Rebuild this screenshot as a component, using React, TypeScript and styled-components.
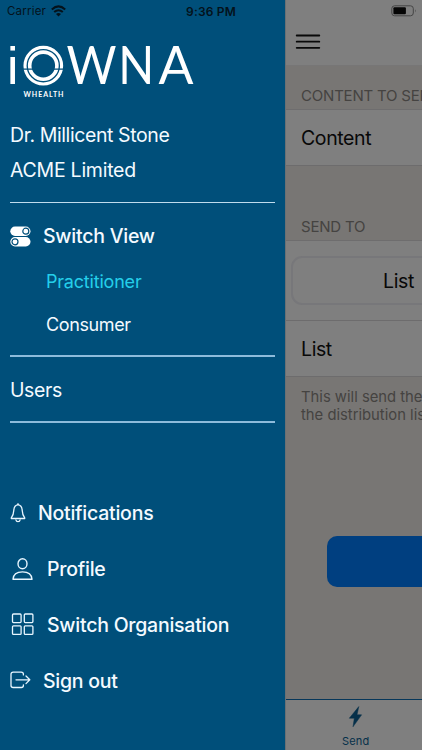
import React from "react";
import styled, { createGlobalStyle } from "styled-components";

const GlobalStyle = createGlobalStyle`
  * { box-sizing: border-box; }
  body { margin: 0; overflow: hidden; font-family: Inter, "Liberation Sans", sans-serif; }
`;

const Screen = styled.div`
  display: grid;
  grid-template-columns: 285px 137px;
  width: 422px;
  height: 750px;
  overflow: hidden;
  background: #7f7f7f;
`;

const Drawer = styled.nav`
  display: flex;
  flex-direction: column;
  background: #004f7a;
  color: #f4faff;
`;

const StatusBar = styled.div`
  display: flex;
  align-items: center;
  flex: none;
  height: 22px;
  color: #04121b;
`;

const Carrier = styled.span`
  width: 44px;
  margin-left: 7px;
  font-size: 11.5px;
  letter-spacing: 0.2px;
  white-space: nowrap;
`;

const Clock = styled.span`
  margin-left: 120px;
  font-size: 12px;
  font-weight: 600;
  letter-spacing: 0.2px;
  white-space: nowrap;
`;

const LogoBox = styled.div`
  flex: none;
  height: 96px;
  svg { display: block; }
`;

const Identity = styled.div<{ $spacing: number }>`
  flex: none;
  height: 35px;
  padding-left: 10px;
  line-height: 35px;
  font-size: 19.5px;
  letter-spacing: ${(p) => p.$spacing}px;
  white-space: nowrap;
`;

const Rule = styled.hr<{ $top?: number; $thick?: boolean }>`
  flex: none;
  width: 265px;
  height: ${(p) => (p.$thick ? 2 : 1)}px;
  margin: ${(p) => p.$top ?? 0}px 0 0 10px;
  border: 0;
  background: ${(p) => (p.$thick ? "#8dbbdb" : "#c0dcee")};
`;

const SwitchHeading = styled.div`
  display: flex;
  align-items: center;
  flex: none;
  height: 40px;
  margin-top: 13px;
  padding-left: 10px;
`;

const Label = styled.span<{ $gap: number }>`
  margin-left: ${(p) => p.$gap}px;
  font-size: 19.5px;
  font-weight: 500;
  letter-spacing: -0.24px;
  white-space: nowrap;
`;

const ViewList = styled.div`
  flex: none;
  margin-top: 5px;
`;

const ViewOption = styled.div<{ $active?: boolean }>`
  height: 42px;
  padding-left: 46px;
  line-height: ${(p) => (p.$active ? 42 : 44)}px;
  font-size: 18px;
  letter-spacing: ${(p) => (p.$active ? -0.2 : -0.38)}px;
  color: ${(p) => (p.$active ? "#24cfea" : "#f4faff")};
`;

const UsersRow = styled.div`
  flex: none;
  height: 64px;
  padding-left: 10px;
  line-height: 67px;
  font-size: 19.5px;
  letter-spacing: -0.4px;
`;

const Actions = styled.div`
  display: grid;
  grid-auto-rows: 56px;
  margin-top: 62px;
`;

const Action = styled.div`
  display: flex;
  align-items: center;
  padding-left: 10px;
  svg { flex: none; display: block; }
`;

const Main = styled.main`
  display: flex;
  flex-direction: column;
  min-width: 0;
  overflow: hidden;
  background: #787674;
  border-left: 1px solid #6a7074;
  color: #080808;
`;

const MainStatus = styled(StatusBar)`
  padding-left: 105px;
  background: #7f7f7f;
`;

const Toolbar = styled.div`
  flex: none;
  height: 44px;
  padding: 11px 0 0 9px;
  background: #7f7f7f;
  border-bottom: 1px solid #777676;
`;

const GroupTitle = styled.div<{ $height: number }>`
  display: flex;
  align-items: flex-end;
  flex: none;
  height: ${(p) => p.$height}px;
  padding: 0 0 4px 15px;
  border-bottom: 1px solid #6e6d6e;
  font-size: 15px;
  line-height: 18px;
  letter-spacing: -0.2px;
  color: #454341;
  white-space: nowrap;
`;

const ListRow = styled.div`
  flex: none;
  height: 56px;
  padding-left: 15px;
  line-height: 57px;
  border-bottom: 1px solid #6d6c6d;
  background: #7f7f7f;
  font-size: 19.5px;
  letter-spacing: -0.4px;
`;

const SegmentRow = styled.div`
  flex: none;
  height: 80px;
  padding: 15px 0 0 5px;
  border-bottom: 1px solid #6d6c6d;
  background: #7f7f7f;
`;

const Segment = styled.div`
  width: 215px;
  height: 49px;
  border: 2px solid #77777a;
  border-radius: 11px;
  line-height: 46px;
  text-align: center;
  font-size: 19.5px;
  letter-spacing: -0.4px;
  background: #7f7f7f;
`;

const Note = styled.p`
  flex: none;
  width: 260px;
  height: 159px;
  margin: 0;
  padding: 11px 0 0 15px;
  font-size: 14.8px;
  line-height: 18px;
  color: #454341;
  white-space: nowrap;
`;

const PrimaryButton = styled.button`
  flex: none;
  display: block;
  width: 180px;
  height: 51px;
  margin-left: 41px;
  border: 0;
  border-radius: 10px;
  background: #003f80;
`;

const TabBar = styled.div`
  display: flex;
  flex-direction: column;
  flex: none;
  height: 51px;
  margin-top: auto;
  padding-left: 56px;
  border-top: 1px solid #07375a;
  background: #7f7f7f;
  color: #06304a;
  svg { display: block; margin: 6px 0 0 6px; }
`;

const TabLabel = styled.span`
  margin-top: 6px;
  font-size: 11px;
  line-height: 14px;
  letter-spacing: 0.2px;
`;

const Logo = () => (
  <svg width="285" height="96" viewBox="0 22 285 96" fill="none" stroke="#fff">
    <g fill="#fff" stroke="none" fontFamily="Lato" fontSize="51.5">
      <text x="6.9" y="84" fontFamily="Liberation Sans">i</text>
      <text x="66.5" y="84" textLength="50" lengthAdjust="spacingAndGlyphs">W</text>
      <text x="118.2" y="84" textLength="36" lengthAdjust="spacingAndGlyphs">N</text>
      <text x="158.5" y="84" textLength="35" lengthAdjust="spacingAndGlyphs">A</text>
    </g>
    <circle cx="43.3" cy="65.7" r="18.3" strokeWidth="3.1" />
    <circle cx="43.3" cy="65.7" r="13.6" strokeWidth="3.6" />
    <path d="M22.5 69.2h10.5M53.6 69.2h10.5" stroke="#004f7a" strokeWidth="1.2" />
    <text x="23.5" y="97" fill="#fff" stroke="none" fontFamily="Lato" fontWeight="700" fontSize="7" textLength="40">
      WHEALTH
    </text>
  </svg>
);

const Wifi = () => (
  <svg width="15" height="12" viewBox="0 0 15 12" fill="none" stroke="currentColor" strokeWidth="2">
    <path d="M.8 4.4q6.7-6.1 13.4 0M3.2 7.1q4.3-3.8 8.6 0" />
    <path d="M5 9.1q2.5-2 5 0L7.5 11.6z" fill="currentColor" stroke="none" />
  </svg>
);

const Battery = () => (
  <svg width="26" height="12" viewBox="0 0 26 12">
    <rect x=".8" y=".8" width="21.5" height="10" rx="2.8" fill="none" stroke="#454545" />
    <rect x="2.4" y="2.3" width="12.5" height="7" rx="1" fill="#050505" />
    <path d="M24 4.2q1.4 1.5 0 3.2z" fill="#454545" />
  </svg>
);

const Toggles = () => (
  <svg width="21" height="21" viewBox="0 0 21 21">
    <rect x=".3" y=".5" width="20.2" height="9.4" rx="4.7" fill="#fff" />
    <rect x=".3" y="11.1" width="20.2" height="9.4" rx="4.7" fill="#fff" />
    <g fill="none" stroke="#004f7a" strokeWidth="1.2">
      <circle cx="15.8" cy="5.2" r="3" />
      <circle cx="5" cy="15.8" r="3" />
    </g>
  </svg>
);

const Bell = () => (
  <svg width="16" height="20" viewBox="0 0 16 20" fill="none" stroke="#e8f6ff" strokeWidth="1.3" strokeLinejoin="round">
    <path d="M8 1.7C4.9 2.2 4 4.6 3.8 7.4 3.6 11.3 2.9 12.8 1.4 14.7q-.5.8.5.8h12.2q1 0 .5-.8c-1.5-1.9-2.2-3.4-2.4-7.3C12 4.6 11.1 2.2 8 1.7z" />
    <path d="M8 1.7V.7M5.9 16.8q.3 1.9 2.1 1.9t2.1-1.9" strokeLinecap="round" />
  </svg>
);

const Person = () => (
  <svg width="24" height="24" viewBox="0 0 24 24" fill="none" stroke="#e8f6ff" strokeWidth="1.4" strokeLinejoin="round">
    <ellipse cx="12.5" cy="6.7" rx="4.5" ry="5" />
    <path d="M3 22.3c.3-4.8 4.2-7.4 9.5-7.4s9.2 2.6 9.5 7.4z" />
  </svg>
);

const Tiles = () => (
  <svg width="24" height="24" viewBox="0 0 24 24" fill="none" stroke="#e8f6ff" strokeWidth="1.3">
    <rect x="2.5" y="1" width="8.6" height="8.6" rx="1" />
    <rect x="14.3" y="1" width="8.6" height="8.6" rx="1" />
    <rect x="2.5" y="12.8" width="8.6" height="8.6" rx="1" />
    <rect x="14.3" y="12.8" width="8.6" height="8.6" rx="1" />
  </svg>
);

const Exit = () => (
  <svg width="21" height="20" viewBox="0 0 21 20" fill="none" stroke="#e8f6ff" strokeWidth="1.3" strokeLinecap="round" strokeLinejoin="round">
    <path d="M13.4 3.9v-.6q0-2.1-2.1-2.1H3.2Q1 1.2 1 3.3v11.1q0 2.1 2.2 2.1h8.1q2.1 0 2.1-2.1v-.6" />
    <path d="M6 8.8h13.7M16 5l3.8 3.8-3.8 3.8" />
  </svg>
);

const Menu = () => (
  <svg width="26" height="18" viewBox="0 0 26 18" stroke="#090909" strokeWidth="1.8" strokeLinecap="round">
    <path d="M1.7 2.5h22.6M1.7 8.7h22.6M1.7 14.8h22.6" />
  </svg>
);

const Bolt = () => (
  <svg width="15" height="22" viewBox="0 0 15 22">
    <path
      d="M10.8.6 1.3 12.2h5L5 20.8 13.6 8.8H9z"
      fill="#06304a"
      stroke="#06304a"
      strokeWidth=".5"
      strokeLinejoin="round"
    />
  </svg>
);

export default function App() {
  return (
    <>
      <GlobalStyle />
      <Screen>
        <Drawer>
          <StatusBar>
            <Carrier>Carrier</Carrier>
            <Wifi />
            <Clock>9:36 PM</Clock>
          </StatusBar>
          <LogoBox><Logo /></LogoBox>
          <Identity $spacing={-0.4}>Dr. Millicent Stone</Identity>
          <Identity $spacing={-0.25}>ACME Limited</Identity>
          <Rule $top={14} />
          <SwitchHeading>
            <Toggles />
            <Label $gap={12}>Switch View</Label>
          </SwitchHeading>
          <ViewList>
            <ViewOption $active>Practitioner</ViewOption>
            <ViewOption>Consumer</ViewOption>
          </ViewList>
          <Rule $top={10} $thick />
          <UsersRow>Users</UsersRow>
          <Rule $thick />
          <Actions>
            <Action><Bell /><Label $gap={12}>Notifications</Label></Action>
            <Action><Person /><Label $gap={13}>Profile</Label></Action>
            <Action><Tiles /><Label $gap={13}>Switch Organisation</Label></Action>
            <Action><Exit /><Label $gap={12}>Sign out</Label></Action>
          </Actions>
        </Drawer>
        <Main>
          <MainStatus><Battery /></MainStatus>
          <Toolbar><Menu /></Toolbar>
          <GroupTitle $height={44}>CONTENT TO SEND</GroupTitle>
          <ListRow>Content</ListRow>
          <GroupTitle $height={75}>SEND TO</GroupTitle>
          <SegmentRow><Segment>List</Segment></SegmentRow>
          <ListRow>List</ListRow>
          <Note>This will send the content to<br />the distribution list selected.</Note>
          <PrimaryButton aria-label="Send content" />
          <TabBar>
            <Bolt />
            <TabLabel>Send</TabLabel>
          </TabBar>
        </Main>
      </Screen>
    </>
  );
}
